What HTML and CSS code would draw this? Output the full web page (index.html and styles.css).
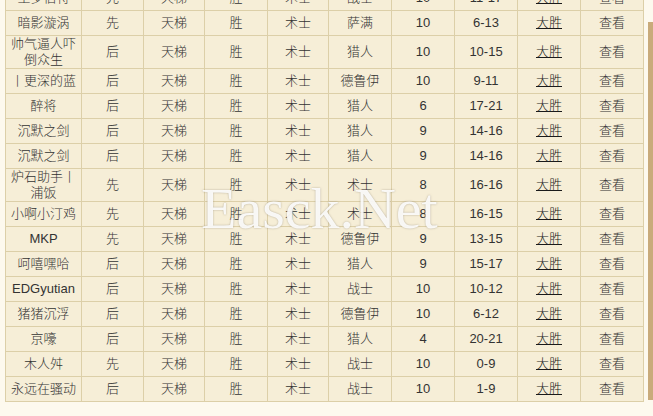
FILE: index.html
```html
<!DOCTYPE html>
<html>
<head>
<meta charset="utf-8">
<link rel="stylesheet" href="styles.css">
</head>
<body>
<div class="page">
  <div class="main">
    <table class="grid">
      <colgroup>
        <col class="c1"><col class="c2"><col class="c3"><col class="c4"><col class="c5">
        <col class="c6"><col class="c7"><col class="c8"><col class="c9"><col class="c10">
      </colgroup>
      <tbody>
        <tr><td>王罗伯特</td><td>先</td><td>天梯</td><td>胜</td><td>术士</td><td>战士</td><td>10</td><td>11-17</td><td><a>大胜</a></td><td>查看</td></tr>
        <tr><td>暗影漩涡</td><td>先</td><td>天梯</td><td>胜</td><td>术士</td><td>萨满</td><td>10</td><td>6-13</td><td><a>大胜</a></td><td>查看</td></tr>
        <tr><td>帅气逼人吓倒众生</td><td>后</td><td>天梯</td><td>胜</td><td>术士</td><td>猎人</td><td>10</td><td>10-15</td><td><a>大胜</a></td><td>查看</td></tr>
        <tr><td>丨更深的蓝</td><td>后</td><td>天梯</td><td>胜</td><td>术士</td><td>德鲁伊</td><td>10</td><td>9-11</td><td><a>大胜</a></td><td>查看</td></tr>
        <tr><td>醉将</td><td>后</td><td>天梯</td><td>胜</td><td>术士</td><td>猎人</td><td>6</td><td>17-21</td><td><a>大胜</a></td><td>查看</td></tr>
        <tr><td>沉默之剑</td><td>后</td><td>天梯</td><td>胜</td><td>术士</td><td>猎人</td><td>9</td><td>14-16</td><td><a>大胜</a></td><td>查看</td></tr>
        <tr><td>沉默之剑</td><td>后</td><td>天梯</td><td>胜</td><td>术士</td><td>猎人</td><td>9</td><td>14-16</td><td><a>大胜</a></td><td>查看</td></tr>
        <tr><td>炉石助手丨浦饭</td><td>先</td><td>天梯</td><td>胜</td><td>术士</td><td>术士</td><td>8</td><td>16-16</td><td><a>大胜</a></td><td>查看</td></tr>
        <tr><td>小啊小汀鸡</td><td>先</td><td>天梯</td><td>胜</td><td>术士</td><td>术士</td><td>8</td><td>16-15</td><td><a>大胜</a></td><td>查看</td></tr>
        <tr><td>MKP</td><td>先</td><td>天梯</td><td>胜</td><td>术士</td><td>德鲁伊</td><td>9</td><td>13-15</td><td><a>大胜</a></td><td>查看</td></tr>
        <tr><td>呵嘻嘿哈</td><td>后</td><td>天梯</td><td>胜</td><td>术士</td><td>猎人</td><td>9</td><td>15-17</td><td><a>大胜</a></td><td>查看</td></tr>
        <tr><td>EDGyutian</td><td>后</td><td>天梯</td><td>胜</td><td>术士</td><td>战士</td><td>10</td><td>10-12</td><td><a>大胜</a></td><td>查看</td></tr>
        <tr><td>猪猪沉浮</td><td>后</td><td>天梯</td><td>胜</td><td>术士</td><td>德鲁伊</td><td>10</td><td>6-12</td><td><a>大胜</a></td><td>查看</td></tr>
        <tr><td>京嚎</td><td>后</td><td>天梯</td><td>胜</td><td>术士</td><td>猎人</td><td>4</td><td>20-21</td><td><a>大胜</a></td><td>查看</td></tr>
        <tr><td>木人舛</td><td>先</td><td>天梯</td><td>胜</td><td>术士</td><td>战士</td><td>10</td><td>0-9</td><td><a>大胜</a></td><td>查看</td></tr>
        <tr><td>永远在骚动</td><td>后</td><td>天梯</td><td>胜</td><td>术士</td><td>战士</td><td>10</td><td>1-9</td><td><a>大胜</a></td><td>查看</td></tr>
      </tbody>
    </table>
    <div class="watermark">Easck.Net</div>
  </div>
  <div class="side"></div>
</div>
</body>
</html>
```
FILE: styles.css
```css
html, body {
  margin: 0;
  padding: 0;
  background: #fdf9ee;
  overflow: hidden;
}
.page {
  display: flex;
  align-items: flex-start;
  height: 416px;
  overflow: hidden;
}
.main {
  position: relative;
  margin-top: -15px;
  padding-left: 5px;
  width: 639px;
  flex: none;
}
.grid {
  border-collapse: collapse;
  table-layout: fixed;
  width: 639px;
  font-family: "Liberation Sans", "Noto Sans CJK SC", sans-serif;
  font-size: 13px;
  font-weight: 300;
  color: #333333;
}
.c1 { width: 76px; }
.c2 { width: 62px; }
.c3 { width: 61px; }
.c4 { width: 63px; }
.c5 { width: 61px; }
.c6 { width: 63px; }
.c7 { width: 63px; }
.c8 { width: 63px; }
.c9 { width: 63px; }
.c10 { width: 63px; }
.grid td {
  height: 24px;
  padding: 0 3px;
  line-height: 16px;
  text-align: center;
  vertical-align: middle;
  background: #f6eed7;
  border: 1px solid #dccfa8;
}
.grid a {
  color: #1a1a1a;
  text-decoration: underline;
}
.watermark {
  position: absolute;
  left: 201px;
  top: 194px;
  font-family: "Liberation Serif", serif;
  font-size: 58px;
  line-height: 60px;
  letter-spacing: 0;
  color: rgba(255, 255, 255, 0.9);
  text-shadow: 0 0 2px rgba(120, 110, 90, 0.55);
  pointer-events: none;
}
.side {
  flex: none;
  margin-top: 22px;
  margin-left: 4px;
  width: 6px;
  height: 378px;
  background: #c9ab7b;
}
```
